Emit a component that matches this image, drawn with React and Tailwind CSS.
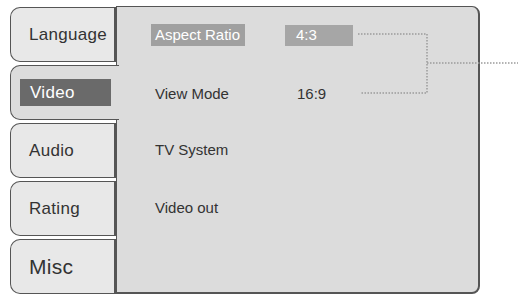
import React from 'react'

const tabs = [
  { label: 'Language', size: 'text-[17px]' },
  { label: 'Video', size: 'text-[17px]', active: true },
  { label: 'Audio', size: 'text-[17px]' },
  { label: 'Rating', size: 'text-[17px]' },
  { label: 'Misc', size: 'text-[21px]' },
]

function Tab({ label, size, active }) {
  if (active) {
    return (
      <div className="relative z-10 flex h-[55px] w-[109px] items-center rounded-l-[10px] border border-r-0 border-[#555] bg-[#dcdcdc] pl-[9px]">
        <div className={`flex h-[27px] w-[91px] items-center bg-[#6a6a6a] pl-[10px] tracking-[0.3px] text-white ${size}`}>
          {label}
        </div>
      </div>
    )
  }
  return (
    <div className={`flex h-[55px] items-center rounded-l-[10px] border border-r-2 border-[#555] bg-[#e8e8e8] pl-[18px] tracking-[0.3px] text-[#333] ${size}`}>
      {label}
    </div>
  )
}

export default function App() {
  return (
    <div
      className="relative flex h-[298px] w-[523px] bg-white pl-[10px] pt-[6px]"
      style={{ fontFamily: '"Liberation Sans", Arial, sans-serif' }}
    >
      {/* Tabs */}
      <div className="mt-px flex w-[106px] flex-col gap-[3px]">
        {tabs.map((t) => (
          <Tab key={t.label} {...t} />
        ))}
      </div>

      {/* Panel */}
      <div className="h-[288px] w-[364px] rounded-r-[8px] border border-r-2 border-b-2 border-[#555] bg-[#dcdcdc] pt-[17px] text-[15px] text-[#333]">
        <div className="flex h-[22px] items-center">
          <div className="ml-[34px] flex h-[22px] w-[94px] items-center bg-[#a0a0a0] pl-[4px] text-white">Aspect Ratio</div>
          <div className="ml-[40px] flex h-[21px] w-[68px] items-center bg-[#a6a6a6] pl-[11px] text-white">4:3</div>
        </div>
        <div className="mt-[37px] flex h-[22px] items-center">
          <div className="ml-[34px] w-[94px] pl-[4px]">View Mode</div>
          <div className="ml-[40px] pl-[12px]">16:9</div>
        </div>
        <div className="mt-[34px] flex h-[22px] items-center">
          <div className="ml-[34px] pl-[4px]">TV System</div>
        </div>
        <div className="mt-[36px] flex h-[22px] items-center">
          <div className="ml-[34px] pl-[4px]">Video out</div>
        </div>
      </div>

      {/* Connector lines */}
      <svg className="pointer-events-none absolute left-0 top-0" width="523" height="298">
        <g stroke="#9a9a9a" strokeWidth="1.5" strokeDasharray="1.5 1.5" fill="none">
          <path d="M358 34H427V93H360" />
          <path d="M427 63H518" />
        </g>
      </svg>
    </div>
  )
}
